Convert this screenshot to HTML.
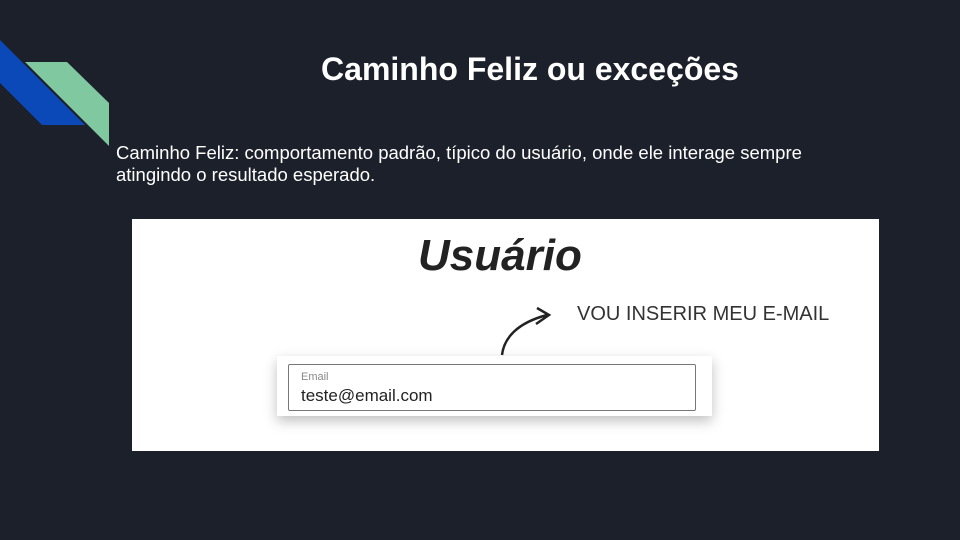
<!DOCTYPE html><html><head><style>
body{margin:0;width:960px;height:540px;background:#1c202b;position:relative;overflow:hidden;font-family:"Liberation Sans",sans-serif}
h1{position:absolute;left:0;width:1060px;top:51px;margin:0;text-align:center;color:#fff;font-size:32px;font-weight:bold}
.p{position:absolute;left:116px;top:142px;color:#fff;font-size:18.5px;line-height:22px}
.img{position:absolute;left:132px;top:219px;width:747px;height:232px;background:#fff}
</style></head><body>
<svg width="120" height="160" style="position:absolute;left:0;top:0">
<polygon points="0,40 85,125 42,125 0,83" fill="#0b48b8"/>
<polygon points="25,62 67,62 109,103 109,146" fill="#7fc8a0"/>
</svg>
<h1>Caminho Feliz ou exceções</h1>
<div class="p">Caminho Feliz: comportamento padrão, típico do usuário, onde ele interage sempre<br>atingindo o resultado esperado.</div>
<div class="img">
<div style="position:absolute;left:286px;top:12px;font-size:44px;font-weight:bold;font-style:italic;color:#222">Usuário</div>
<div style="position:absolute;left:445px;top:84px;font-size:20px;color:#333">VOU INSERIR MEU E-MAIL</div>
<svg width="80" height="60" style="position:absolute;left:360px;top:84px"><path d="M10,52 C12,35 25,20 55,12 M45,5 L57,12 L44,21" fill="none" stroke="#222" stroke-width="2.5"/></svg>
<div style="position:absolute;left:145px;top:137px;width:435px;height:60px;background:#fff;box-shadow:0 5px 12px rgba(0,0,0,.25)"></div>
<div style="position:absolute;left:156px;top:145px;width:406px;height:45px;border:1px solid #777;border-radius:2px;background:#fff">
<div style="position:absolute;left:12px;top:6px;font-size:11px;color:#888">Email</div>
<div style="position:absolute;left:12px;top:21px;font-size:17px;color:#222">teste@email.com</div>
</div>
</div>
</body></html>
